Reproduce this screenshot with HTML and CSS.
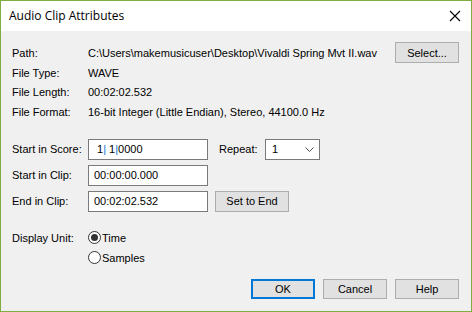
FILE: index.html
```html
<!DOCTYPE html>
<html lang="en">
<head>
    <meta charset="UTF-8">
    <title>Audio Clip Attributes</title>
    <link rel="stylesheet" href="styles.css">
</head>
<body>
    <div class="dialog">
        <div class="titlebar">
            <span class="title">Audio Clip Attributes</span>
            <svg class="close" width="12" height="12" viewBox="0 0 12 12">
                <path d="M1 1 L11 11 M11 1 L1 11" stroke="#000" stroke-width="1.1" fill="none"/>
            </svg>
        </div>
        <div class="content">
            <div class="info">
                <div class="row path-row">
                    <span class="label">Path:</span>
                    <span class="value grow">C:\Users\makemusicuser\Desktop\Vivaldi Spring Mvt II.wav</span>
                    <button class="btn select-btn">Select...</button>
                </div>
                <div class="row info-row">
                    <span class="label">File Type:</span>
                    <span class="value">WAVE</span>
                </div>
                <div class="row info-row">
                    <span class="label">File Length:</span>
                    <span class="value">00:02:02.532</span>
                </div>
                <div class="row info-row">
                    <span class="label">File Format:</span>
                    <span class="value">16-bit Integer (Little Endian), Stereo, 44100.0 Hz</span>
                </div>
            </div>

            <div class="fields">
                <div class="row field-row">
                    <span class="label">Start in Score:</span>
                    <div class="textbox">&nbsp;1<span class="sep">|</span> 1<span class="sep">|</span>0000</div>
                    <span class="repeat-label">Repeat:</span>
                    <div class="combo">
                        <span>1</span>
                        <svg width="9" height="5" viewBox="0 0 9 5">
                            <path d="M0.5 0.5 L4.5 4.5 L8.5 0.5" stroke="#555" fill="none"/>
                        </svg>
                    </div>
                </div>
                <div class="row field-row">
                    <span class="label">Start in Clip:</span>
                    <div class="textbox">00:00:00.000</div>
                </div>
                <div class="row field-row">
                    <span class="label">End in Clip:</span>
                    <div class="textbox">00:02:02.532</div>
                    <button class="btn end-btn">Set to End</button>
                </div>
            </div>

            <div class="units">
                <span class="label">Display Unit:</span>
                <div class="radios">
                    <div class="radio-item"><span class="radio checked"></span>Time</div>
                    <div class="radio-item"><span class="radio"></span>Samples</div>
                </div>
            </div>

            <div class="actions">
                <button class="btn action default">OK</button>
                <button class="btn action">Cancel</button>
                <button class="btn action">Help</button>
            </div>
        </div>
    </div>
</body>
</html>
```

FILE: styles.css
```css
/* dialog frame */
body, html {
    margin: 0;
    padding: 0;
}

body {
    font-family: Tahoma, "Liberation Sans", Arial, sans-serif;
    font-size: 11px;
    color: #000;
}

.dialog {
    width: 472px;
    height: 312px;
    box-sizing: border-box;
    border: 1px solid #7fae3e;
    background: #f0f0f0;
    display: flex;
    flex-direction: column;
}

.titlebar {
    height: 30px;
    background: #fff;
    display: flex;
    align-items: center;
    justify-content: space-between;
    padding: 0 10px 0 8px;
}

.title {
    font-family: "Open Sans", "Noto Sans", sans-serif;
    font-size: 12px;
    color: #000;
    margin-top: -1px;
}

.close {
    margin-right: 0px;
}

.content {
    padding: 11px 12px 0 11px;
    display: flex;
    flex-direction: column;
}

.row {
    display: flex;
    align-items: center;
}

.label {
    width: 76px;
    flex: none;
}

.grow {
    flex: 1;
}

.path-row {
    height: 21px;
}

.info-row {
    height: 19.5px;
}

.btn {
    font-family: inherit;
    font-size: 11px;
    color: #000;
    background: #e1e1e1;
    border: 1px solid #adadad;
    box-sizing: border-box;
    padding: 0;
    height: 21px;
}

.select-btn {
    width: 64px;
}

.fields {
    margin-top: 17px;
    display: flex;
    flex-direction: column;
    gap: 5px;
}

.field-row {
    height: 21px;
}

.textbox {
    width: 120px;
    height: 21px;
    box-sizing: border-box;
    border: 1px solid #7a7a7a;
    background: #fff;
    padding: 0 5px;
    display: flex;
    align-items: center;
    white-space: pre;
}

.sep {
    color: #0078d7;
}

.repeat-label {
    margin-left: 11px;
    width: 46px;
}

.combo {
    width: 55px;
    height: 21px;
    box-sizing: border-box;
    border: 1px solid #7a7a7a;
    background: #fff;
    display: flex;
    align-items: center;
    justify-content: space-between;
    padding: 0 5px 0 6px;
}

.end-btn {
    width: 74px;
    margin-left: 7px;
}

.units {
    margin-top: 19px;
    display: flex;
    align-items: flex-start;
}

.units .label {
    line-height: 14px;
}

.radios {
    display: flex;
    flex-direction: column;
    gap: 6px;
}

.radio-item {
    display: flex;
    align-items: center;
    height: 14px;
}

.radio {
    width: 13px;
    height: 13px;
    box-sizing: border-box;
    border: 1px solid #333;
    border-radius: 50%;
    background: #fff;
    margin-right: 1px;
    position: relative;
}

.radio.checked::after {
    content: "";
    position: absolute;
    left: 2px;
    top: 2px;
    width: 7px;
    height: 7px;
    border-radius: 50%;
    background: #333;
}

.actions {
    margin-top: 14px;
    display: flex;
    justify-content: flex-end;
    gap: 8px;
    padding-right: 0;
}

.action {
    width: 64px;
    height: 20px;
}

.action.default {
    border: 2px solid #0078d7;
}
```
